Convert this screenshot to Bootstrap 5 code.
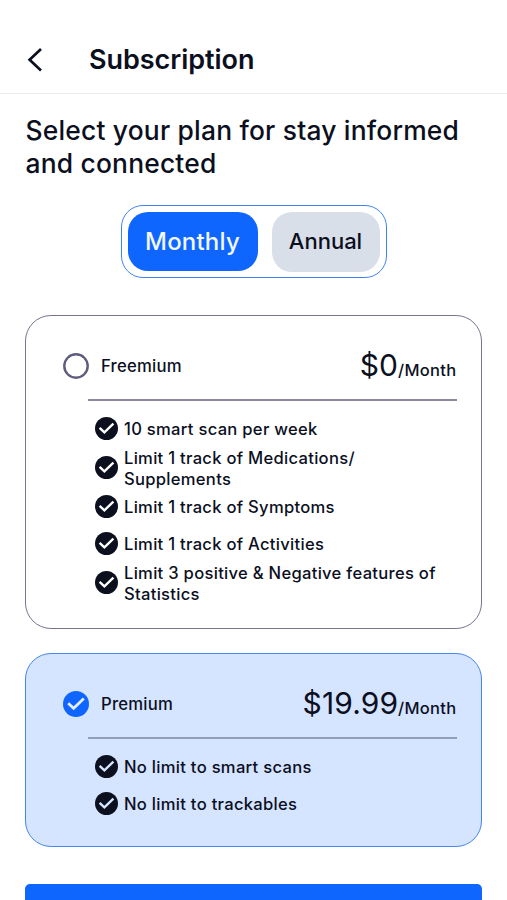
<!DOCTYPE html>
<html lang="en">
<head>
<meta charset="utf-8">
<meta name="viewport" content="width=device-width, initial-scale=1">
<title>Subscription</title>
<link href="https://cdn.jsdelivr.net/npm/bootstrap@5.3.0/dist/css/bootstrap.min.css" rel="stylesheet">
<style>
  body { font-family: Inter, sans-serif; color: #0b0f1e; background: #fff; height: 900px; overflow: hidden; }
  .topbar { height: 94px; padding: 43px 26px 0; border-bottom: 1px solid #e9e9ee; }
  .topbar h1 { font-size: 27px; line-height: 33px; font-weight: 600; letter-spacing: -.05px; margin-left: 45px; }
  .back-btn { width: 18px; height: 26px; }
  .page { padding: 20px 25px 0; }
  .intro { font-size: 26.4px; line-height: 33px; font-weight: 500; letter-spacing: .2px; margin-bottom: 25px; padding-left: .5px; white-space: nowrap; }
  .period { width: 266px; height: 73px; border: 1.5px solid #3f83f3; border-radius: 22px; padding: 0 6px; margin-bottom: 37px; }
  .period .btn { border: 0; border-radius: 20px; padding: 0; }
  .period .monthly { width: 130px; height: 59px; background: #0f66ff; color: #f3f7ff; font-size: 24px; font-weight: 500; letter-spacing: .2px; }
  .period .annual { width: 108px; height: 60px; background: #d9dfe9; color: #0b0f1e; font-size: 22px; font-weight: 500; }
  .plan { border: 1.5px solid #77758f; border-radius: 26px; padding: 29px 24.5px 0 37px; background: transparent; color: inherit; }
  .plan-free { height: 314px; margin-bottom: 24px; }
  .plan-premium { height: 194px; background: #d5e4ff; border-color: #4687ee; margin-bottom: 37px; }
  .plan-head { height: 42px; }
  .plan-name { font-size: 16.7px; font-weight: 500; letter-spacing: .22px; margin: 1px 0 0 12px; }
  .price { font-size: 30px; line-height: 42px; margin-top: 2px; letter-spacing: .1px; }
  .price span { font-size: 16.5px; font-weight: 500; letter-spacing: .3px; }
  .rule { height: 2px; margin: 12.4px 0 8.6px 25px; background: #8b89a1; }
  .plan-premium .rule { background: #939db5; }
  .features { padding-left: 31.5px; font-size: 16.6px; line-height: 20.8px; font-weight: 500; letter-spacing: .28px; }
  .features li { min-height: 36.8px; gap: 6.5px; white-space: nowrap; }
  .features span { padding-top: 1px; margin-bottom: -1px; }
  .cta { height: 60px; background: #0f66ff; border-radius: 5px; }
  svg { flex: none; display: block; }
</style>
<script src="https://cdn.jsdelivr.net/npm/bootstrap@5.3.0/dist/js/bootstrap.bundle.min.js"></script>
</head>
<body>
<svg width="0" height="0" class="position-absolute" aria-hidden="true">
  <symbol id="check" viewBox="0 0 24 24">
    <circle cx="12" cy="12" r="12" fill="currentColor"/>
    <path d="M4.8 11.3 9.8 16 19.2 7" fill="none" stroke="var(--tick)" stroke-width="2.5"/>
  </symbol>
</svg>
<header class="topbar d-flex align-items-start">
  <a href="#" class="text-reset pt-1" aria-label="Back">
    <svg class="back-btn" viewBox="0 0 18 26" fill="none" stroke="#0b0f1e" stroke-width="2.7"><path d="M15 2 3.6 12.8 15 23.6"/></svg>
  </a>
  <h1 class="mb-0">Subscription</h1>
</header>
<main class="page">
  <h2 class="intro">Select your plan for stay informed<br>and connected</h2>
  <div class="period mx-auto d-flex align-items-center justify-content-between">
    <button class="btn monthly">Monthly</button>
    <button class="btn annual">Annual</button>
  </div>
  <section class="card plan plan-free">
    <div class="plan-head d-flex align-items-center">
      <svg width="26" height="26" viewBox="0 0 26 26"><circle cx="13" cy="13" r="11.7" fill="#fff" stroke="#5f5d7d" stroke-width="2.4"/></svg>
      <span class="plan-name">Freemium</span>
      <div class="price ms-auto">$0<span>/Month</span></div>
    </div>
    <div class="rule"></div>
    <ul class="features list-unstyled mb-0">
      <li class="d-flex align-items-center"><svg width="23" height="23" style="--tick:#fff"><use href="#check"/></svg><span>10 smart scan per week</span></li>
      <li class="d-flex align-items-center"><svg width="23" height="23" style="--tick:#fff"><use href="#check"/></svg><span>Limit 1 track of Medications/<br>Supplements</span></li>
      <li class="d-flex align-items-center"><svg width="23" height="23" style="--tick:#fff"><use href="#check"/></svg><span>Limit 1 track of Symptoms</span></li>
      <li class="d-flex align-items-center"><svg width="23" height="23" style="--tick:#fff"><use href="#check"/></svg><span>Limit 1 track of Activities</span></li>
      <li class="d-flex align-items-center"><svg width="23" height="23" style="--tick:#fff"><use href="#check"/></svg><span>Limit 3 positive &amp; Negative features of<br>Statistics</span></li>
    </ul>
  </section>
  <section class="card plan plan-premium">
    <div class="plan-head d-flex align-items-center">
      <svg width="26" height="26" style="color:#0f66ff;--tick:#e6efff"><use href="#check"/></svg>
      <span class="plan-name">Premium</span>
      <div class="price ms-auto">$19.99<span>/Month</span></div>
    </div>
    <div class="rule"></div>
    <ul class="features list-unstyled mb-0">
      <li class="d-flex align-items-center"><svg width="23" height="23" style="--tick:#d5e4ff"><use href="#check"/></svg><span>No limit to smart scans</span></li>
      <li class="d-flex align-items-center"><svg width="23" height="23" style="--tick:#d5e4ff"><use href="#check"/></svg><span>No limit to trackables</span></li>
    </ul>
  </section>
  <div class="cta"></div>
</main>
</body>
</html>
